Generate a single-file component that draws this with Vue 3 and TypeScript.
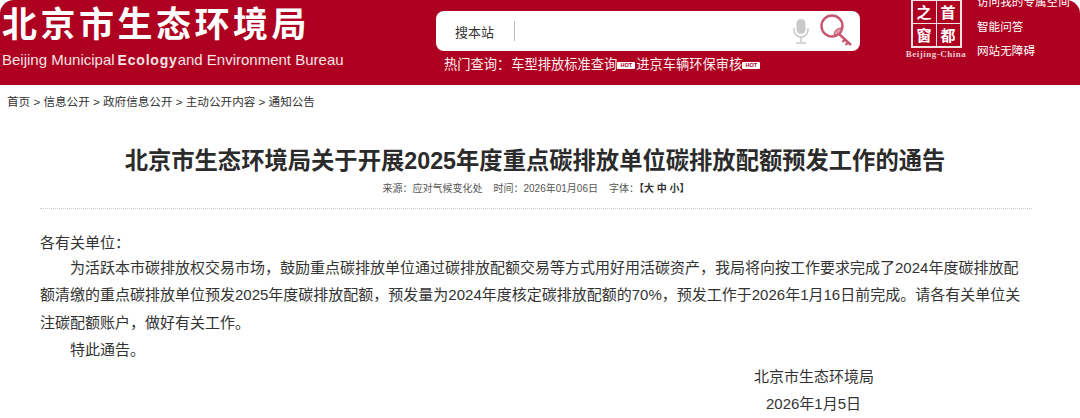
<template>
  <div class="page">
    <header class="top">
      <div class="brand">
        <div class="brand-cn">北京市生态环境局</div>
        <div class="brand-en">Beijing Municipal<b>Ecology</b>and Environment Bureau</div>
      </div>
      <div class="search-col">
        <div class="search">
          <span class="search-label">搜本站</span>
          <span class="search-sep"></span>
          <svg class="mic" width="16" height="25" viewBox="0 0 16 25">
            <rect x="3.5" y="0" width="9" height="15" rx="4.5" fill="#c9c9c9" />
            <path d="M1 9v2a7 7 0 0 0 14 0V9" fill="none" stroke="#c9c9c9" stroke-width="1.5" />
            <path d="M8 18v5M3 24h10" fill="none" stroke="#c9c9c9" stroke-width="1.5" />
          </svg>
          <svg class="key" width="33" height="33" viewBox="0 0 33 33">
            <circle cx="12" cy="12" r="10.5" fill="none" stroke="#c8566e" stroke-width="2.4" />
            <path d="M14 21c0-4 3-7 7-7 1 4-3 7-7 7z" fill="#dc97a6" stroke="#c8566e" stroke-width="1" />
            <path d="M19 20l12 11M25 25.500l-2.500 2.500M28 28.500l-2.500 2.500" fill="none" stroke="#c8566e" stroke-width="2.400" />
          </svg>
        </div>
        <div class="hot">
          <span class="hot-label">热门查询：</span><span>车型排放标准查询</span><i class="tag">HOT</i><span>进京车辆环保审核</span><i class="tag">HOT</i>
        </div>
      </div>
      <div class="seal">
        <div class="seal-box">
          <span>之</span><span>首</span><span>窗</span><span>都</span>
        </div>
        <div class="seal-en">Beijing-China</div>
      </div>
      <ul class="side-links">
        <li v-for="link in sideLinks" :key="link">{{ link }}</li>
      </ul>
    </header>

    <nav class="crumbs">首页 &gt; 信息公开 &gt; 政府信息公开 &gt; 主动公开内容 &gt; 通知公告</nav>

    <main class="article">
      <h1>北京市生态环境局关于开展2025年度重点碳排放单位碳排放配额预发工作的通告</h1>
      <div class="meta">
        <span>来源：应对气候变化处</span>
        <span>时间：2026年01月06日</span>
        <span>字体：<b>【大 中 小】</b></span>
      </div>
      <div class="body">
        <p class="first">各有关单位：</p>
        <p class="indent">为活跃本市碳排放权交易市场，鼓励重点碳排放单位通过碳排放配额交易等方式用好用活碳资产，我局将向按工作要求完成了2024年度碳排放配额清缴的重点碳排放单位预发2025年度碳排放配额，预发量为2024年度核定碳排放配额的70%，预发工作于2026年1月16日前完成。请各有关单位关注碳配额账户，做好有关工作。</p>
        <p class="indent">特此通告。</p>
        <p class="sign">北京市生态环境局</p>
        <p class="sign date">2026年1月5日</p>
      </div>
    </main>
  </div>
</template>

<script setup lang="ts">
const sideLinks: string[] = ['访问我的专属空间', '智能问答', '网站无障碍']
</script>

<style scoped>
.page {
  width: 1080px;
  height: 418px;
  overflow: hidden;
  background: #fff;
  font-family: "Liberation Sans", "Noto Sans CJK SC", sans-serif;
  color: #333;
}

.top {
  height: 85px;
  background: #ae0020;
  border-radius: 14px 14px 0 0;
  display: flex;
  overflow: hidden;
  color: #fff;
}

.brand {
  width: 436px;
  flex: none;
  padding: 3px 0 0 2px;
  box-sizing: border-box;
}
.brand-cn {
  font-size: 35px;
  line-height: 44px;
  font-weight: 700;
  letter-spacing: 3.5px;
  white-space: nowrap;
}
.brand-en {
  font-size: 15px;
  line-height: 20px;
  margin-top: 3px;
  white-space: nowrap;
  color: #f6e3e6;
}
.brand-en b {
  margin: 0 0 0 3px;
  font-size: 14px;
  letter-spacing: 0.8px;
}

.search-col {
  width: 424px;
  flex: none;
  padding-top: 11px;
}
.search {
  height: 40px;
  background: #fff;
  border-radius: 8px;
  display: flex;
  align-items: center;
  color: #333;
}
.search-label {
  font-size: 13px;
  margin-left: 19px;
  width: 59px;
}
.search-sep {
  width: 1px;
  height: 20px;
  background: #bbb;
}
.mic {
  margin-left: auto;
  margin-right: 11px;
  margin-top: 1px;
}
.key {
  margin-right: 7px;
  margin-top: -1px;
}
.hot {
  display: flex;
  align-items: center;
  font-size: 13.25px;
  line-height: 20px;
  margin-top: 4px;
  padding-left: 8px;
  white-space: nowrap;
  color: #fbeef0;
}
.hot-label {
  margin-right: 1px;
}
.tag {
  font-style: normal;
  font-size: 5.5px;
  line-height: 7px;
  font-weight: 700;
  width: 18px;
  margin-right: 1px;
  text-align: center;
  background: #fff;
  color: #ae0020;
  border-radius: 1px;
}

.seal {
  width: 62px;
  flex: none;
  margin-left: 45px;
  margin-top: -1px;
  text-align: center;
}
.seal-box {
  width: 51px;
  height: 49px;
  margin: 0 auto;
  border: 2px solid #f4dfe2;
  display: grid;
  grid-template-columns: 1fr 1fr;
  grid-template-rows: 1fr 1fr;
  gap: 1px;
  background: #f4dfe2;
  box-sizing: border-box;
}
.seal-box span {
  background: #ae0020;
  font-size: 15px;
  line-height: 22px;
  text-align: center;
  font-family: "Noto Sans CJK SC", sans-serif;
  font-weight: 700;
  overflow: hidden;
}
.seal-en {
  font-family: "Liberation Serif", serif;
  font-size: 9px;
  font-weight: 700;
  letter-spacing: 0.5px;
  line-height: 10px;
  margin-top: 1px;
  color: #eccbd1;
  white-space: nowrap;
}

.side-links {
  list-style: none;
  margin: -10px 0 0 10px;
  padding: 0;
  font-size: 11.6px;
  line-height: 24.5px;
  white-space: nowrap;
}

.crumbs {
  font-size: 11.6px;
  line-height: 16px;
  padding: 9px 0 0 7px;
  color: #333;
}

.article {
  padding: 0 48px 0 40px;
}
h1 {
  margin: 35px 0 0 -2px;
  font-size: 23.3px;
  line-height: 32px;
  font-weight: 700;
  text-align: center;
  white-space: nowrap;
  color: #2b2b2b;
}
.meta {
  display: flex;
  justify-content: center;
  gap: 11px;
  font-size: 10px;
  line-height: 14px;
  margin-top: 5px;
  padding-bottom: 12px;
  border-bottom: 1px dotted #ccc;
  color: #555;
}
.meta b {
  font-weight: 700;
  color: #333;
}
.body {
  margin-top: 20px;
  font-size: 15px;
  line-height: 27.2px;
}
.body p {
  margin: 0;
}
.first {
  margin-bottom: -2px !important;
}
.indent {
  text-indent: 30px;
}
.sign {
  margin-left: 714px !important;
}
.date {
  margin-left: 726px !important;
}
</style>
